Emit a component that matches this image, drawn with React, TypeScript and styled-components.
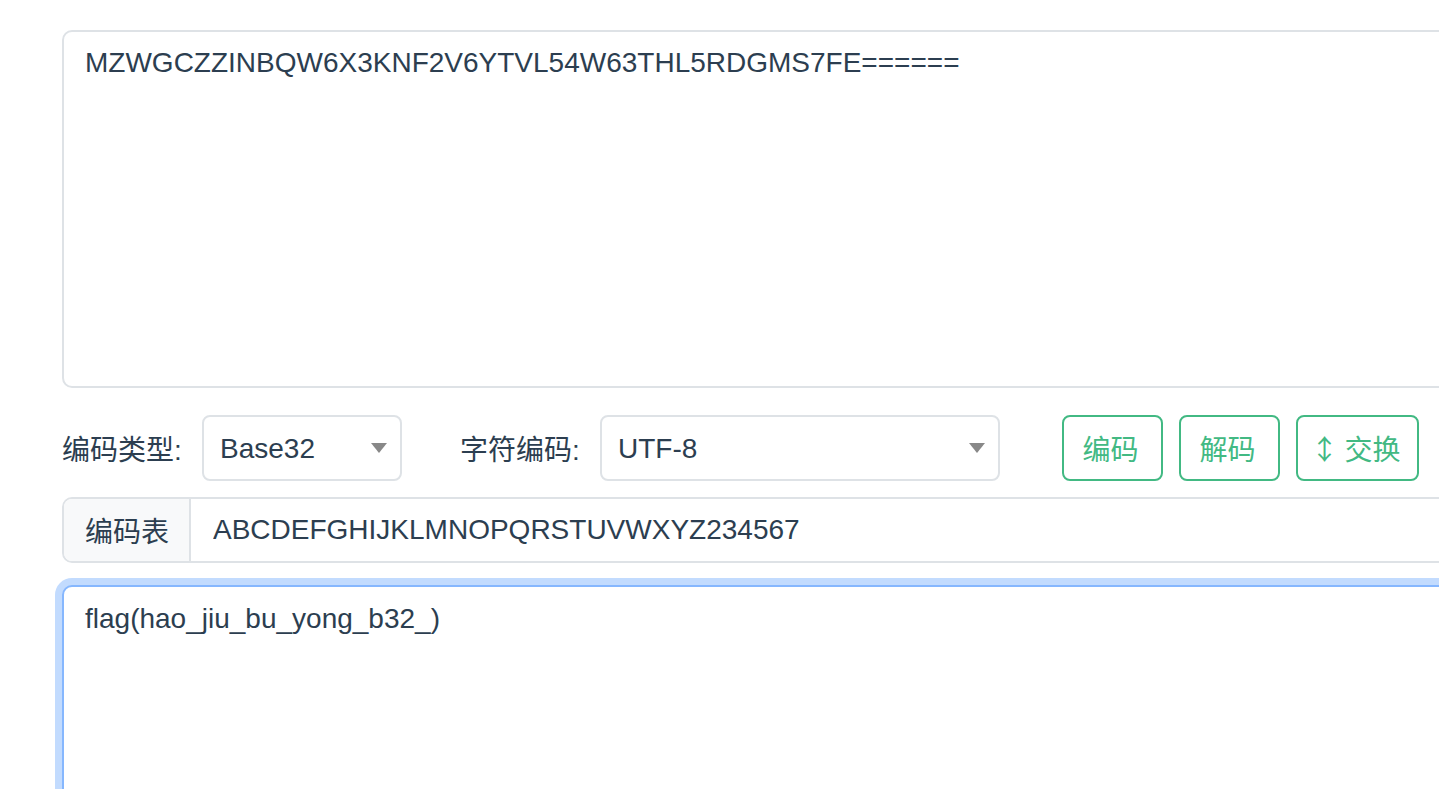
import React from "react";
import styled, { createGlobalStyle } from "styled-components";

const GlobalStyle = createGlobalStyle`
  html, body {
    margin: 0;
    padding: 0;
    background: #ffffff;
    overflow: hidden;
  }
  body {
    font-family: "Liberation Sans", "Noto Sans CJK SC", sans-serif;
    color: #2c3e50;
  }
  * { box-sizing: border-box; }
`;

const Page = styled.div`
  padding: 30px 0 0 62px;
  width: 1640px;
  display: flex;
  flex-direction: column;
`;

const TextArea = styled.textarea<{ $focused?: boolean; $height: number }>`
  display: block;
  width: 100%;
  height: ${(p) => p.$height}px;
  resize: none;
  font-family: "Liberation Sans", "Noto Sans CJK SC", sans-serif;
  font-size: 28px;
  line-height: 42px;
  color: #2c3e50;
  padding: ${(p) => (p.$focused ? 11 : 10)}px 21px;
  border: 2px solid ${(p) => (p.$focused ? "#86b7fe" : "#dee2e6")};
  border-radius: 10px;
  outline: none;
  box-shadow: ${(p) => (p.$focused ? "0 0 0 7px #c2dbfe" : "none")};
  background: #fff;
`;

const Toolbar = styled.div`
  display: flex;
  align-items: center;
  height: 66px;
  margin-top: 27px;
`;

const Label = styled.span<{ $first?: boolean }>`
  width: 140px;
  margin-left: ${(p) => (p.$first ? 0 : 58)}px;
  font-size: 28px;
  color: #2c3e50;
  white-space: nowrap;
`;

const Select = styled.div<{ $width: number }>`
  position: relative;
  width: ${(p) => p.$width}px;
  height: 66px;
  border: 2px solid #dee2e6;
  border-radius: 8px;
  display: flex;
  align-items: center;
  padding: 2px 16px 0;
  font-size: 28px;
  color: #2c3e50;
  background: #fff;
`;

const Caret = styled.span`
  position: absolute;
  right: 13px;
  top: 26px;
  width: 0;
  height: 0;
  border-left: 8px solid transparent;
  border-right: 8px solid transparent;
  border-top: 10px solid #888888;
`;

const ButtonGroup = styled.div`
  display: flex;
  gap: 16px;
  margin-left: 62px;
`;

const Button = styled.button<{ $width: number }>`
  width: ${(p) => p.$width}px;
  height: 66px;
  border: 2px solid #42b983;
  border-radius: 8px;
  background: #fff;
  color: #42b983;
  font-family: "Liberation Sans", "Noto Sans CJK SC", sans-serif;
  font-size: 28px;
  display: flex;
  align-items: center;
  justify-content: center;
  gap: 6px;
  padding: 0 4px 0 0;
  cursor: pointer;
`;

const SwapArrow = styled.span`
  font-family: "Noto Sans CJK SC", sans-serif;
  font-size: 28px;
`;

const InputGroup = styled.div`
  display: flex;
  height: 66px;
  margin-top: 16px;
  border: 2px solid #dee2e6;
  border-radius: 10px;
  overflow: hidden;
`;

const Prepend = styled.span`
  width: 127px;
  flex: none;
  display: flex;
  align-items: center;
  padding-left: 21px;
  background: #f8f9fa;
  border-right: 2px solid #dee2e6;
  font-size: 28px;
  color: #2c3e50;
`;

const Input = styled.input`
  flex: 1;
  border: none;
  outline: none;
  padding: 0 22px;
  font-family: "Liberation Sans", "Noto Sans CJK SC", sans-serif;
  font-size: 28px;
  color: #2c3e50;
  background: #fff;
`;

const Output = styled.div`
  margin-top: 22px;
`;

export default function App() {
  return (
    <>
      <GlobalStyle />
      <Page>
        <TextArea
          $height={358}
          defaultValue="MZWGCZZINBQW6X3KNF2V6YTVL54W63THL5RDGMS7FE======"
        />
        <Toolbar>
          <Label $first>编码类型:</Label>
          <Select $width={200}>
            Base32
            <Caret />
          </Select>
          <Label>字符编码:</Label>
          <Select $width={400}>
            UTF-8
            <Caret />
          </Select>
          <ButtonGroup>
            <Button $width={101}>编码</Button>
            <Button $width={101}>解码</Button>
            <Button $width={123}>
              <SwapArrow>↕</SwapArrow>交换
            </Button>
          </ButtonGroup>
        </Toolbar>
        <InputGroup>
          <Prepend>编码表</Prepend>
          <Input defaultValue="ABCDEFGHIJKLMNOPQRSTUVWXYZ234567" />
        </InputGroup>
        <Output>
          <TextArea $focused $height={360} defaultValue="flag(hao_jiu_bu_yong_b32_)" />
        </Output>
      </Page>
    </>
  );
}
